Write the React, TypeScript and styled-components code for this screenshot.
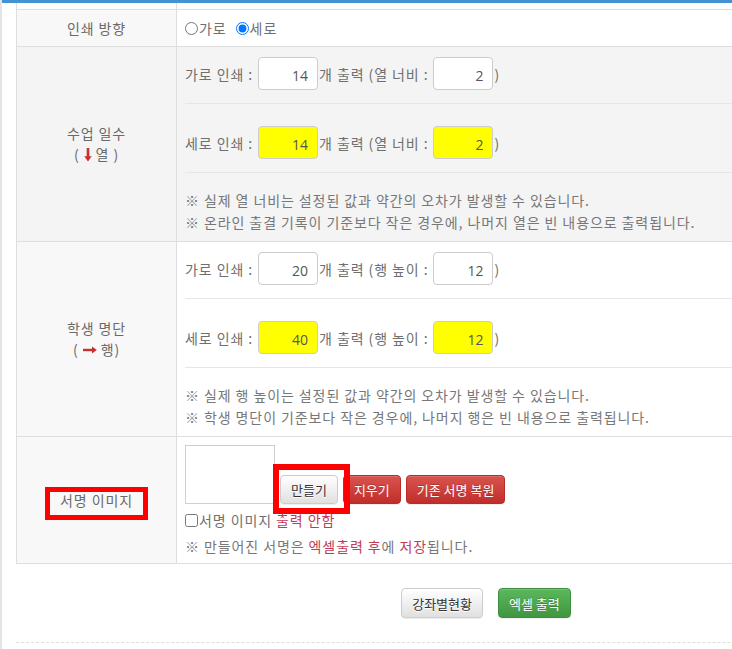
import * as React from 'react';
import styled, { createGlobalStyle, css } from 'styled-components';

const GlobalStyle = createGlobalStyle`
  html, body {
    margin: 0;
    padding: 0;
    background: #fff;
    overflow: hidden;
  }
  body {
    font-family: "Noto Sans CJK KR", "Noto Sans", sans-serif;
    font-size: 14px;
    letter-spacing: 0.065em;
    color: #6f6f6f;
  }
`;

const RED = '#c9302c';

const Page = styled.div`
  width: 732px;
  height: 649px;
  box-sizing: border-box;
  border-left: 2px solid #e4e4e4;
  overflow: hidden;
`;

const TopBar = styled.div`
  height: 3px;
  background: #4592d3;
`;

const Container = styled.div`
  width: 940px;
  margin-left: 14px;
`;

const Table = styled.table`
  width: 940px;
  border-collapse: collapse;
  table-layout: fixed;
`;

const Row = styled.tr<{ $striped?: boolean }>`
  background: ${(p) => (p.$striped ? '#f4f4f4' : '#fff')};
`;

const Label = styled.th<{ $bg?: string }>`
  width: 160px;
  padding: 0;
  border: 1px solid #dedede;
  background: ${(p) => p.$bg || '#f8f8f8'};
  font-weight: normal;
  text-align: center;
  vertical-align: middle;
  color: #6a6a6a;
  line-height: 21px;
`;

const Cell = styled.td`
  padding: 0 8px;
  border: 1px solid #dedede;
  vertical-align: middle;
`;

const CutLabel = styled(Label)`
  height: 6px;
  border-top: none;
  background: #fff;
`;

const CutCell = styled(Cell)`
  height: 6px;
  border-top: none;
`;

const RadioLine = styled.div`
  height: 36px;
  display: flex;
  align-items: center;
  gap: 9px;
`;

const Choice = styled.label`
  display: inline-flex;
  align-items: center;
  color: #6f6f6f;
  input {
    margin: 0 1px 0 0;
    width: 13px;
    height: 13px;
  }
`;

const SubRow = styled.div<{ $top: number }>`
  display: flex;
  align-items: center;
  padding: ${(p) => p.$top}px 0 13px;
  border-bottom: 1px solid #e6e6e6;
  white-space: pre;
`;

const NumInput = styled.input<{ $hl?: boolean }>`
  width: 60px;
  height: 33px;
  box-sizing: border-box;
  margin: 0 1px 0 5px;
  padding: 4px 9px 0 6px;
  border: 1px solid #cccccc;
  border-radius: 4px;
  background: ${(p) => (p.$hl ? '#ffff00' : '#fff')};
  text-align: right;
  font-family: "Open Sans", "Noto Sans", sans-serif;
  font-size: 14px;
  color: #555;
  outline: none;
`;

const Notes = styled.div`
  padding: 16px 0 8px;
  line-height: 22px;
  color: #777;
`;

const SigCell = styled(Cell)`
  padding: 8px 8px 6px;
`;

const SigLine = styled.div`
  display: flex;
  align-items: flex-end;
  gap: 5px;
`;

const SigBox = styled.div`
  width: 90px;
  height: 59px;
  box-sizing: border-box;
  border: 1px solid #cfcfcf;
  background: #fff;
`;

const Marked = styled.span<{ $t: number; $r: number; $b: number; $l: number; $w: number }>`
  position: relative;
  display: inline-block;
  &::after {
    content: '';
    position: absolute;
    top: ${(p) => -p.$t}px;
    right: ${(p) => -p.$r}px;
    bottom: ${(p) => -p.$b}px;
    left: ${(p) => -p.$l}px;
    border: ${(p) => p.$w}px solid #ff0000;
    pointer-events: none;
  }
`;

const variants = {
  default: css`
    color: #333;
    background: linear-gradient(to bottom, #ffffff 0%, #e0e0e0 100%);
    border-color: #cccccc;
    text-shadow: 0 1px 0 #fff;
  `,
  danger: css`
    color: #fff;
    background: linear-gradient(to bottom, #d9534f 0%, #c12e2a 100%);
    border-color: #b92c28;
    text-shadow: 0 -1px 0 rgba(0, 0, 0, 0.2);
  `,
  success: css`
    color: #fff;
    background: linear-gradient(to bottom, #5cb85c 0%, #419641 100%);
    border-color: #3e8f3e;
    text-shadow: 0 -1px 0 rgba(0, 0, 0, 0.2);
  `,
};

const Btn = styled.button<{ $variant: keyof typeof variants; $h?: number }>`
  height: ${(p) => p.$h || 29}px;
  padding: 0 10px;
  margin: 0;
  border: 1px solid;
  border-radius: 4px;
  font-family: "Noto Sans CJK KR", sans-serif;
  font-size: 13px;
  line-height: 1;
  box-shadow: inset 0 1px 0 rgba(255, 255, 255, 0.15), 0 1px 1px rgba(0, 0, 0, 0.075);
  cursor: pointer;
  ${(p) => variants[p.$variant]}
`;

const CheckLine = styled.label`
  display: flex;
  align-items: center;
  margin-top: 5px;
  line-height: 22px;
  color: #6f6f6f;
  input {
    margin: 0 1px 0 0;
    width: 13px;
    height: 13px;
  }
`;

const Red = styled.span`
  color: #c23a58;
`;

const SigNote = styled.div`
  margin-top: 4px;
  line-height: 22px;
  color: #777;
`;

const Actions = styled.div`
  display: flex;
  justify-content: center;
  gap: 15px;
  padding: 24px 0 24px;
  border-bottom: 1px dashed #dddddd;
`;

const DownArrow = () => (
  <svg width="8" height="14" viewBox="0 0 8 14" style={{ verticalAlign: '-2px' }}>
    <rect x="2.7" y="0" width="2.6" height="9" fill={RED} />
    <path d="M0.3 8.2 L7.7 8.2 L4 13.6 Z" fill={RED} />
  </svg>
);

const RightArrow = () => (
  <svg width="14" height="8" viewBox="0 0 14 8" style={{ verticalAlign: '1px' }}>
    <rect x="0" y="2.8" width="9.5" height="2.4" fill={RED} />
    <path d="M9 0.6 L13.8 4 L9 7.4 Z" fill={RED} />
  </svg>
);

type SizeProps = {
  lead: string;
  mid: string;
  first: [number, number];
  second: [number, number];
  notes: string[];
};

const SizeBlock = ({ lead, mid, first, second, notes }: SizeProps) => (
  <>
    <SubRow $top={10}>
      <span>가로 인쇄 :</span>
      <NumInput defaultValue={first[0]} />
      <span>{`개 출력 (${lead} ${mid} :`}</span>
      <NumInput defaultValue={first[1]} />
      <span>)</span>
    </SubRow>
    <SubRow $top={22}>
      <span>세로 인쇄 :</span>
      <NumInput $hl defaultValue={second[0]} />
      <span>{`개 출력 (${lead} ${mid} :`}</span>
      <NumInput $hl defaultValue={second[1]} />
      <span>)</span>
    </SubRow>
    <Notes>
      {notes.map((n) => (
        <div key={n}>{n}</div>
      ))}
    </Notes>
  </>
);

export default function App() {
  return (
    <Page>
      <GlobalStyle />
      <TopBar />
      <Container>
        <Table>
          <colgroup>
            <col style={{ width: 160 }} />
            <col />
          </colgroup>
          <tbody>
            <Row>
              <CutLabel />
              <CutCell />
            </Row>
            <Row>
              <Label>인쇄 방향</Label>
              <Cell>
                <RadioLine>
                  <Choice>
                    <input type="radio" name="dir" />
                    가로
                  </Choice>
                  <Choice>
                    <input type="radio" name="dir" defaultChecked />
                    세로
                  </Choice>
                </RadioLine>
              </Cell>
            </Row>
            <Row $striped>
              <Label $bg="#f4f4f4">
                <div>수업 일수</div>
                <div>
                  ( <DownArrow /> 열 )
                </div>
              </Label>
              <Cell>
                <SizeBlock
                  lead="열"
                  mid="너비"
                  first={[14, 2]}
                  second={[14, 2]}
                  notes={[
                    '※ 실제 열 너비는 설정된 값과 약간의 오차가 발생할 수 있습니다.',
                    '※ 온라인 출결 기록이 기준보다 작은 경우에, 나머지 열은 빈 내용으로 출력됩니다.',
                  ]}
                />
              </Cell>
            </Row>
            <Row>
              <Label>
                <div>학생 명단</div>
                <div>
                  ( <RightArrow /> 행)
                </div>
              </Label>
              <Cell>
                <SizeBlock
                  lead="행"
                  mid="높이"
                  first={[20, 12]}
                  second={[40, 12]}
                  notes={[
                    '※ 실제 행 높이는 설정된 값과 약간의 오차가 발생할 수 있습니다.',
                    '※ 학생 명단이 기준보다 작은 경우에, 나머지 행은 빈 내용으로 출력됩니다.',
                  ]}
                />
              </Cell>
            </Row>
            <Row>
              <Label>
                <Marked $t={3} $r={15} $b={9} $l={15} $w={5}>
                  서명 이미지
                </Marked>
              </Label>
              <SigCell>
                <SigLine>
                  <SigBox />
                  <Marked $t={11} $r={12} $b={10} $l={7} $w={6}>
                    <Btn $variant="default">만들기</Btn>
                  </Marked>
                  <Btn $variant="danger">지우기</Btn>
                  <Btn $variant="danger">기존 서명 복원</Btn>
                </SigLine>
                <CheckLine>
                  <input type="checkbox" />
                  서명 이미지&nbsp;<Red>출력 안함</Red>
                </CheckLine>
                <SigNote>
                  ※ 만들어진 서명은 <Red>엑셀출력 후</Red>에 <Red>저장</Red>됩니다.
                </SigNote>
              </SigCell>
            </Row>
          </tbody>
        </Table>
        <Actions>
          <Btn $variant="default" $h={30}>
            강좌별현황
          </Btn>
          <Btn $variant="success" $h={30}>
            엑셀 출력
          </Btn>
        </Actions>
      </Container>
    </Page>
  );
}
